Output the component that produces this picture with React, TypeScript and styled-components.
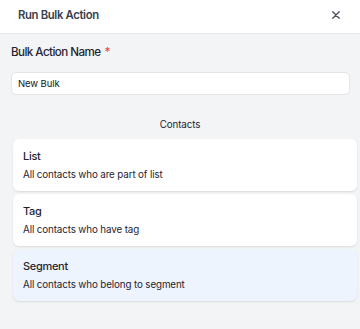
import React from 'react';
import styled, { createGlobalStyle } from 'styled-components';

const GlobalStyle = createGlobalStyle`
  html, body {
    margin: 0;
    padding: 0;
    background: #f3f4f6;
  }
  body {
    font-family: Inter, "Noto Sans", "Liberation Sans", sans-serif;
    -webkit-font-smoothing: antialiased;
  }
  * { box-sizing: border-box; }
`;

const Panel = styled.div`
  width: 360px;
  height: 329px;
  background: #f3f4f6;
  display: flex;
  flex-direction: column;
`;

const Header = styled.div`
  height: 34px;
  flex-shrink: 0;
  display: flex;
  align-items: center;
  justify-content: space-between;
  padding: 0 19px 3px 18px;
  background: #ffffff;
  border-bottom: 1px solid #e3e5e8;
`;

const Title = styled.h2`
  margin: 0;
  font-size: 11.3px;
  font-weight: 600;
  letter-spacing: -0.35px;
  color: #3a404b;
`;

const CloseButton = styled.button`
  border: none;
  background: none;
  padding: 0;
  width: 10px;
  height: 10px;
  display: flex;
  align-items: center;
  justify-content: center;
  color: #4b5563;
  cursor: pointer;
`;

const Body = styled.div`
  padding: 10px 3px 0 11px;
  display: flex;
  flex-direction: column;
`;

const Label = styled.label`
  font-size: 11.6px;
  line-height: 17px;
  font-weight: 500;
  letter-spacing: -0.55px;
  color: #1f2430;
`;

const Required = styled.span`
  color: #ef4444;
  margin-left: 4px;
`;

const Input = styled.input`
  margin-top: 11px;
  width: 339px;
  height: 23px;
  padding: 0 6px;
  border: 1px solid #e2e4e8;
  border-radius: 5px;
  background: #ffffff;
  font-family: inherit;
  font-size: 9.5px;
  letter-spacing: -0.1px;
  color: #111827;
  outline: none;
`;

const SectionTitle = styled.div`
  margin-top: 23px;
  text-align: center;
  padding-right: 8px;
  font-size: 9.8px;
  letter-spacing: -0.1px;
  line-height: 14px;
  color: #1f2430;
`;

const CardList = styled.div`
  margin: 7px 0 0 2px;
  display: flex;
  flex-direction: column;
  gap: 3px;
`;

const Card = styled.div<{ selected?: boolean }>`
  height: 52px;
  padding: 9px 10px 8px;
  border-radius: 6px;
  background: ${p => (p.selected ? '#eef4fd' : '#ffffff')};
  box-shadow: 0 1px 2px rgba(0, 0, 0, 0.1);
  cursor: pointer;
`;

const CardTitle = styled.div`
  font-size: 11px;
  line-height: 16px;
  font-weight: 500;
  letter-spacing: -0.3px;
  color: #1f2430;
  margin-bottom: 4px;
`;

const CardDesc = styled.div`
  font-size: 9.8px;
  line-height: 14px;
  letter-spacing: -0.12px;
  color: #1f2430;
`;

const options = [
  { title: 'List', desc: 'All contacts who are part of list' },
  { title: 'Tag', desc: 'All contacts who have tag' },
  { title: 'Segment', desc: 'All contacts who belong to segment', selected: true },
];

export default function App() {
  return (
    <>
      <GlobalStyle />
      <Panel>
        <Header>
          <Title>Run Bulk Action</Title>
          <CloseButton aria-label="Close">
            <svg width="8" height="8" viewBox="0 0 8 8" fill="none">
              <path d="M0.8 0.8L7.2 7.2M7.2 0.8L0.8 7.2" stroke="currentColor" strokeWidth="1.4" strokeLinecap="round" />
            </svg>
          </CloseButton>
        </Header>
        <Body>
          <Label>
            Bulk Action Name<Required>*</Required>
          </Label>
          <Input defaultValue="New Bulk" />
          <SectionTitle>Contacts</SectionTitle>
          <CardList>
            {options.map(o => (
              <Card key={o.title} selected={o.selected}>
                <CardTitle>{o.title}</CardTitle>
                <CardDesc>{o.desc}</CardDesc>
              </Card>
            ))}
          </CardList>
        </Body>
      </Panel>
    </>
  );
}
